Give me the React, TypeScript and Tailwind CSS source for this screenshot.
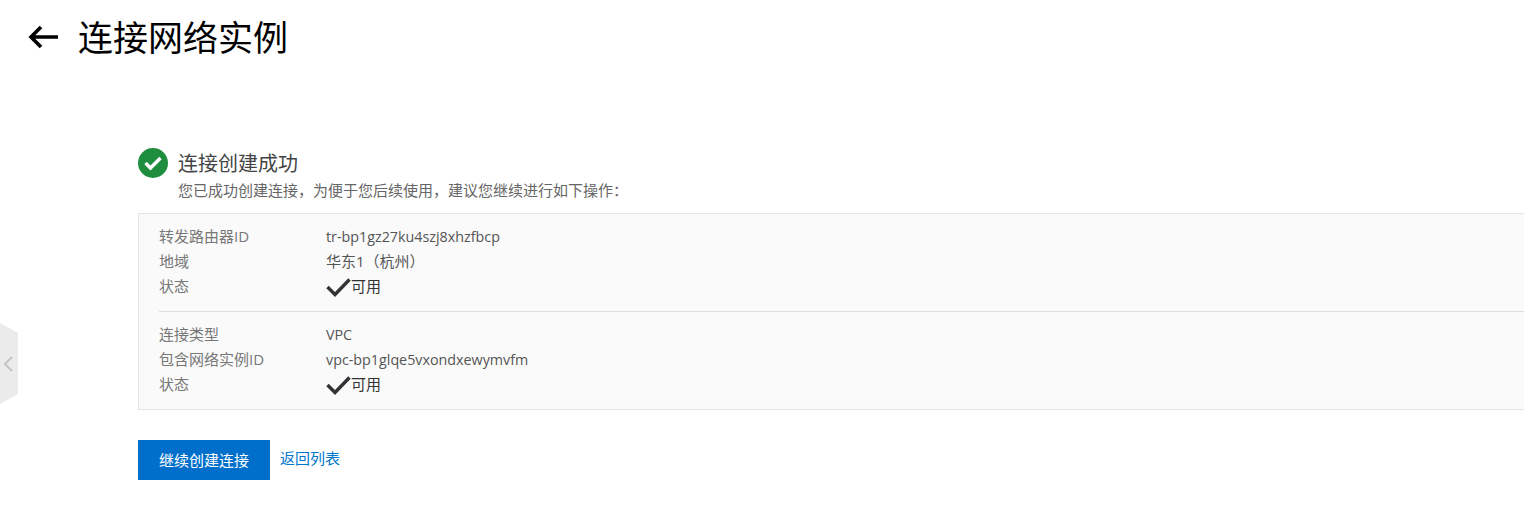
import React from "react";

const font = { fontFamily: '"Open Sans","Noto Sans CJK SC",sans-serif' };

function Check() {
  return (
    <svg width="25" height="20" viewBox="0 0 25 20" className="shrink-0">
      <path d="M1.5 10 L9 17.5 L23.5 2.5" fill="none" stroke="#333" strokeWidth="3.4" />
    </svg>
  );
}

function Row({ label, value }: { label: string; value: React.ReactNode }) {
  return (
    <div className="flex h-[25px] items-center text-[15px] leading-[25px]">
      <div className="w-[167px] shrink-0 text-[#777]">{label}</div>
      <div className="flex items-center text-[#555]">{value}</div>
    </div>
  );
}

const ok = (
  <span className="flex items-center text-[#333]">
    <Check />
    <span className="-mt-[1px]">可用</span>
  </span>
);

const latin = (text: string) => <span className="text-[14.3px]">{text}</span>;

export default function App() {
  return (
    <div className="relative h-[519px] w-[1524px] overflow-hidden bg-white" style={font}>
      <header className="flex h-[74px] items-center pl-[28px]">
        <svg width="32" height="26" viewBox="0 0 32 26" className="mr-[18px]">
          <path d="M30 13 H3 M13 3 L3 13 L13 23" fill="none" stroke="#000" strokeWidth="3.6" />
        </svg>
        <h1 className="text-[35px] font-normal leading-none text-black">连接网络实例</h1>
      </header>

      <main className="pl-[138px] pt-[74px]">
        <div className="flex h-[30px] items-center">
          <div className="flex h-[30px] w-[30px] items-center justify-center rounded-full bg-[#1e8e3e]">
            <svg width="20" height="16" viewBox="0 0 20 16">
              <path d="M2.5 8 L7.5 13 L17.5 3" fill="none" stroke="#fff" strokeWidth="3.5" />
            </svg>
          </div>
          <div className="ml-[10px] mt-[2px] text-[20px] leading-[30px] text-[#444]">连接创建成功</div>
        </div>
        <div className="ml-[40px] h-[22px] text-[15px] leading-[25px] text-[#666]">
          您已成功创建连接，为便于您后续使用，建议您继续进行如下操作：
        </div>

        <section className="mt-[13px] h-[197px] border-y border-l border-[#e5e5e5] bg-[#fafafa] pl-[20px] pt-[10px]">
          <Row label="转发路由器ID" value={latin("tr-bp1gz27ku4szj8xhzfbcp")} />
          <Row label="地域" value="华东1（杭州）" />
          <Row label="状态" value={ok} />
          <div className="mb-[10px] mt-[12px] h-px bg-[#ddd]" />
          <Row label="连接类型" value={latin("VPC")} />
          <Row label="包含网络实例ID" value={latin("vpc-bp1glqe5vxondxewymvfm")} />
          <Row label="状态" value={ok} />
        </section>

        <div className="mt-[30px] flex items-start">
          <button className="h-[40px] w-[132px] bg-[#006fcc] text-[15px] text-white">继续创建连接</button>
          <a className="ml-[10px] mt-[7px] text-[15px] leading-[22px] text-[#0077cc]">返回列表</a>
        </div>
      </main>

      <div className="absolute left-0 top-[323px] h-[81px] w-[18px]">
        <svg width="18" height="81" viewBox="0 0 18 81" className="absolute inset-0">
          <path d="M0 0 L18 10 V71 L0 81 Z" fill="#ebebeb" />
          <path d="M12 34 L5 41 L12 48" fill="none" stroke="#c4c4c4" strokeWidth="2" />
        </svg>
      </div>
    </div>
  );
}
